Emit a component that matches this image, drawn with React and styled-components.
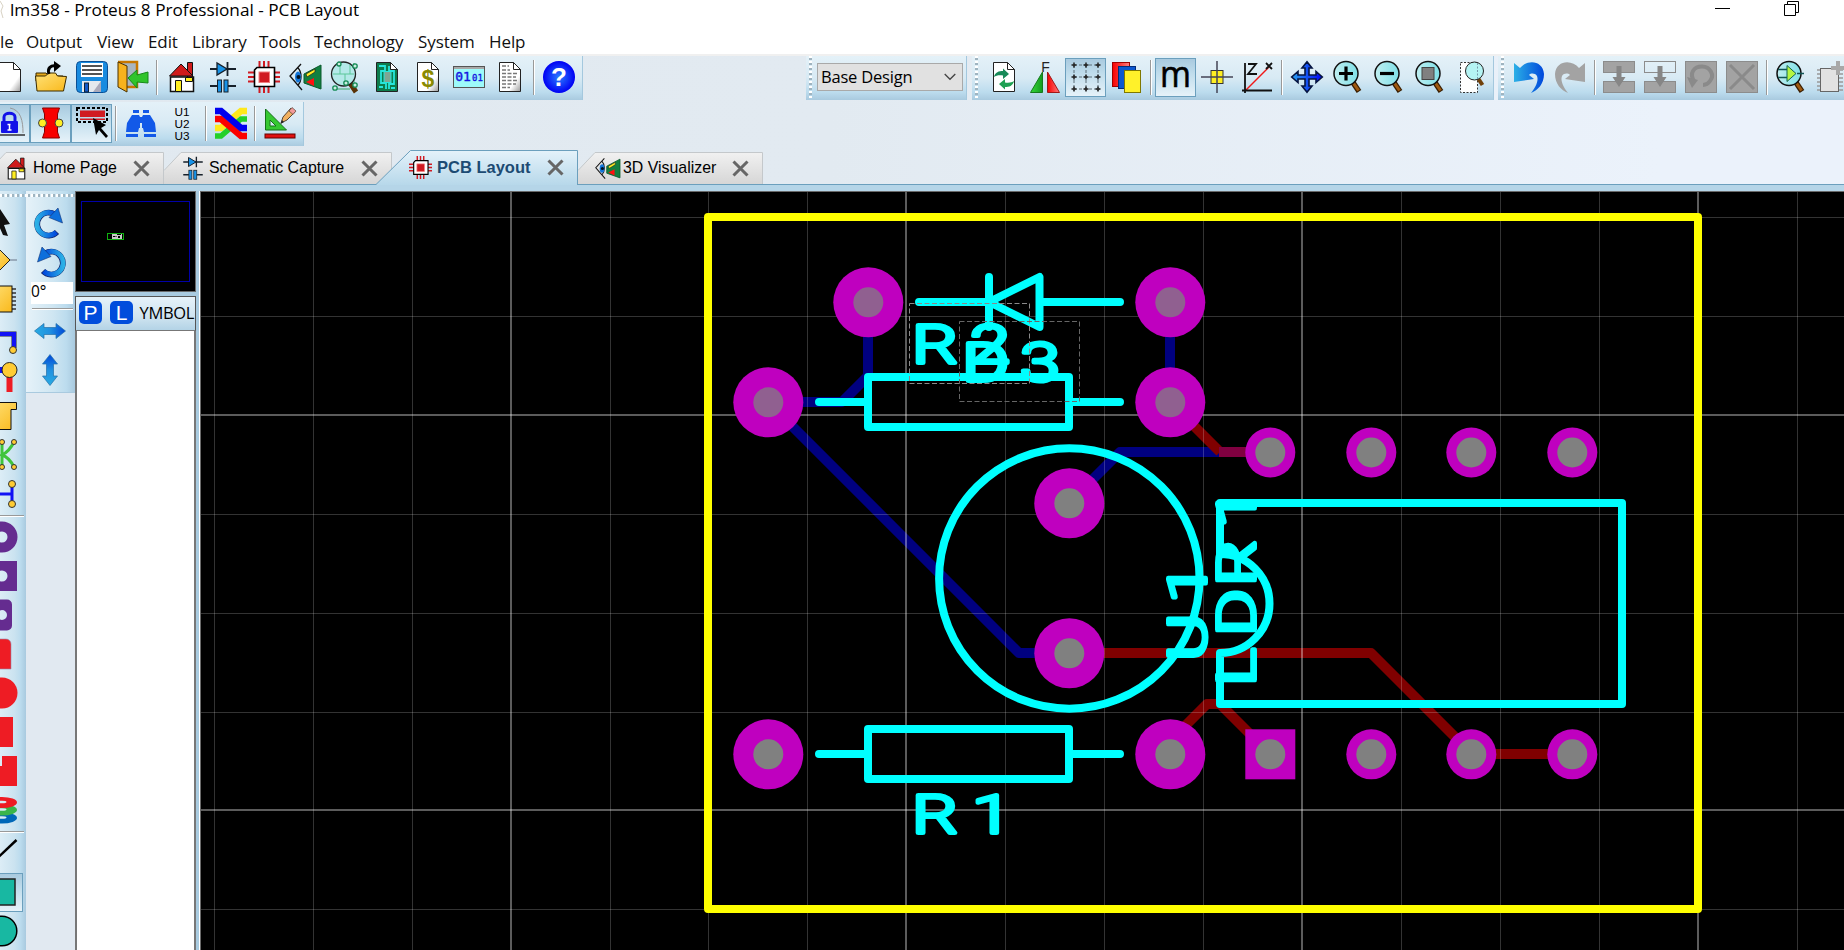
import React from "react";
import styled, { createGlobalStyle, css } from "styled-components";

const GlobalStyle = createGlobalStyle`
  * { box-sizing: border-box; }
  html, body { margin: 0; padding: 0; overflow: hidden; }
`;

const ui = `"Open Sans", "Noto Sans", sans-serif`;
const arial = `"Liberation Sans", Arial, sans-serif`;
const barGradient = `#e4f1f8 0%, #d8eaf4 50%, #bcdcee 82%, #a9cadf 100%`;

/* ---------- window frame ---------- */
const Window = styled.div`
  width: 1844px;
  height: 950px;
  overflow: hidden;
  display: flex;
  flex-direction: column;
  background: #fff;
  font-family: ${ui};
`;
const TitleBar = styled.header`
  height: 26px;
  display: flex;
  align-items: flex-start;
`;
const TitleText = styled.div`
  margin-left: 6px;
  width: 400px;
  font-size: 17.2px;
  line-height: 20px;
  white-space: nowrap;
  color: #000;
`;
const WindowButtons = styled.div`
  margin-left: auto;
  margin-right: 45px;
  display: flex;
  gap: 54px;
`;
const MenuBar = styled.nav`
  height: 28px;
  display: flex;
  gap: 14px;
  color: #111;
`;
const MenuItem = styled.span`
  width: ${(p) => p.$w}px;
  font-size: 17px;
  line-height: 32px;
  letter-spacing: -0.1px;
  white-space: nowrap;
`;

/* ---------- toolbars ---------- */
const Dock = styled.div`
  height: 131px;
  flex: none;
  border-top: 2px solid #f0f0f0;
  background: linear-gradient(90deg, #e1e9f0 0%, #e2eaf1 45%, #ebf2fb 90%);
  display: flex;
  flex-direction: column;
`;
const DockRow = styled.div`
  height: ${(p) => p.$h}px;
  padding-top: ${(p) => p.$pt || 0}px;
  display: flex;
  flex: none;
`;
const Group = styled.div`
  height: 44px;
  width: ${(p) => p.$w}px;
  flex: none;
  padding-bottom: 2px;
  margin-left: ${(p) => p.$ml || 0}px;
  display: flex;
  align-items: center;
  background: linear-gradient(180deg, ${barGradient});
  border-right: 1px solid #a4c8de;
`;
const Grip = styled.span`
  width: 3px;
  height: 42px;
  flex: none;
  margin: 0 ${(p) => p.$mr}px 0 3px;
  background: repeating-linear-gradient(180deg, #fff 0 2px, #9fb4c0 2px 4px, transparent 4px 5px);
`;
const cellSize = css`
  width: ${(p) => (p.$side ? 41.5 : 41)}px;
  height: 39px;
`;
const ToolButton = styled.button`
  ${cellSize}
  flex: none;
  padding: 0;
  margin: 0;
  border: 1px solid transparent;
  background: none;
  display: flex;
  align-items: center;
  justify-content: center;
  ${(p) =>
    p.$on &&
    css`
      border-color: #6b9fbd;
      background: linear-gradient(180deg, #a9cadf, #c0ddec 40%, #e6f2f9);
    `}
`;
const Separator = styled.span`
  width: 2px;
  height: 35px;
  margin: 0 3px;
  flex: none;
  border-left: 1px solid #999;
  border-right: 1px solid #fff;
`;
const SelectBox = styled.div`
  width: 146px;
  height: 28px;
  border: 1px solid #a9a9a9;
  background: #e1e1e1;
  padding: 0 6px 0 3px;
  display: flex;
  align-items: center;
  justify-content: space-between;
  font-size: 16.5px;
  letter-spacing: -0.2px;
  line-height: 26px;
  color: #000;
  white-space: nowrap;
`;

/* ---------- tabs ---------- */
const TabStrip = styled.div`
  height: 35px;
  margin-top: auto;
  display: flex;
  align-items: flex-end;
  border-bottom: 1px solid #6b9fbd;
`;
const Tab = styled.div`
  position: relative;
  width: ${(p) => p.$w}px;
  height: ${(p) => (p.$active ? 35 : 32)}px;
  margin-left: ${(p) => p.$ml || 0}px;
  margin-bottom: ${(p) => (p.$active ? -1 : 0)}px;
  z-index: ${(p) => (p.$active ? 2 : 1)};
  flex: none;
`;
const TabShape = styled.svg`
  position: absolute;
  inset: 0;
`;
const TabContent = styled.div`
  position: relative;
  height: 100%;
  display: flex;
  align-items: center;
  padding-left: ${(p) => p.$pl}px;
  font-family: ${arial};
  font-size: ${(p) => (p.$active ? 16.5 : 15.9)}px;
  font-weight: ${(p) => (p.$active ? 700 : 400)};
  color: ${(p) => (p.$active ? "#1d4b73" : "#000")};
  white-space: nowrap;
`;
const TabLabel = styled.span`
  width: ${(p) => p.$w}px;
  margin-left: ${(p) => p.$ml}px;
`;

/* ---------- body ---------- */
const Body = styled.main`
  flex: 1;
  min-height: 0;
  display: flex;
  border-top: 6px solid #b5d5e8;
  background: #e1e9f1;
`;
const ModeBar = styled.aside`
  width: 26px;
  flex: none;
  overflow: hidden;
  background: linear-gradient(90deg, #dcedf6 0, #cbe3f0 55%, #bcdcee 78%, #a9cadf 100%);
`;
const ModeStack = styled.div`
  width: 41px;
  margin-left: -19px;
  display: flex;
  flex-direction: column;
`;
const HGrip = styled.div`
  height: 3px;
  margin: 3px 0 4.5px;
  flex: none;
  background: repeating-linear-gradient(90deg, #fff 0 2px, #9fb4c0 2px 4px, transparent 4px 5px);
`;
const HRule = styled.div`
  height: 2px;
  width: ${(p) => p.$w}px;
  margin: ${(p) => p.$m};
  flex: none;
  border-top: 1px solid #999;
  border-bottom: 1px solid #fff;
`;
const RotateBar = styled.aside`
  width: 49px;
  height: 202px;
  flex: none;
  display: flex;
  flex-direction: column;
  align-items: center;
  background: linear-gradient(90deg, #e6f2f9, #cfe6f2 55%, #bcdcee 82%, #a9cadf 100%);
  border-bottom: 1px solid #a9cadf;
`;
const RotateGrip = styled(HGrip)`
  align-self: stretch;
  margin-bottom: 0;
`;
const AngleField = styled.div`
  width: 42px;
  height: 22px;
  margin: 5px 2px 3px 5px;
  background: #fff;
  font-size: 15.5px;
  line-height: 19px;
  color: #000;
  flex: none;
`;
const IconSlot = styled.span`
  display: flex;
  margin: ${(p) => p.$m};
`;
const SidePanel = styled.section`
  width: 125px;
  flex: none;
  display: flex;
  flex-direction: column;
  background: #a9cbe0;
  border-right: 1px solid #fff;
`;
const Preview = styled.div`
  width: 121px;
  height: 101px;
  flex: none;
  background: #000;
  border: 1px solid #6a6a6a;
`;
const PanelHeader = styled.div`
  width: 121px;
  height: 35px;
  margin-top: 4px;
  flex: none;
  padding: 0 0 2px 3px;
  display: flex;
  align-items: center;
  overflow: hidden;
  background: linear-gradient(180deg, #e6f2f9, #cfe4f0 60%, #b3d3e6);
  border: 1px solid #555;
  border-bottom-color: #777;
  font-size: 16.5px;
  letter-spacing: -0.3px;
  color: #000;
`;
const Badge = styled.span`
  width: 23px;
  height: 23px;
  margin-right: 8px;
  flex: none;
  border-radius: 5px;
  background: #004ddc;
  color: #fff;
  font-family: ${arial};
  font-size: 21px;
  line-height: 23px;
  text-align: center;
  letter-spacing: 0;
  & + & {
    margin-right: 6.5px;
  }
`;
const ListBox = styled.div`
  width: 121px;
  flex: 1;
  background: #fff;
  border: 2px solid #777;
  border-top: 0;
  border-bottom: 0;
`;
const Canvas = styled.div`
  flex: 1;
  min-width: 0;
  background: #000;
  border-left: 1px solid #6a6a6a;
`;
const Art = styled.svg`
  display: block;
  flex: none;
`;
const IconArt = styled(Art)`
  overflow: visible;
`;

/* ---------- icons ---------- */
const I = ({ children, w = 32, h = 32, vb }) => (
  <IconArt width={w} height={h} viewBox={vb || "0 0 32 32"} fill="none">
    {children}
  </IconArt>
);
const Page = ({ fill = "#fff", children }) => (
  <I>
    <path d="M5.500 1.500h14l7 7v22h-21z" fill={fill} stroke="#222" />
    <path d="M19.500 1.500v7h7z" fill="#fff" stroke="#222" />
    {children}
  </I>
);
const NewIcon = () => <Page fill="url(#paper)" />;
const OpenIcon = () => (
  <I>
    <path d="M1 12h10l3 3h14v5H1z" fill="#e5a91c" stroke="#3a2a00" />
    <path d="M2 30L0.500 15h10l3-3h7l2 3 9 .5L28.500 30z" fill="url(#gold)" stroke="#3a2a00" />
    <path d="M14 13c-2-6 2-9 7-8" stroke="#000" strokeWidth="3" />
    <path d="M19 0l7 5-7 6z" fill="#000" />
  </I>
);
const SaveIcon = () => (
  <I>
    <rect x=".5" y=".5" width="31" height="31" rx="4" fill="#188be0" stroke="#0c4f94" />
    <rect x="5" y="2" width="22" height="14" fill="#fff" />
    <path d="M6 5h20M6 9h20M6 13h20" stroke="#1b1b1b" strokeWidth="1.500" />
    <rect x="6" y="20" width="19" height="11" fill="#e4e9ee" />
    <path d="M17 31l8-11v11z" fill="#aab" />
    <rect x="8.500" y="22" width="4" height="9" fill="#1259c9" stroke="#123" />
  </I>
);
const ExitIcon = () => (
  <I>
    <path d="M1 1h19v25H8" fill="#a8b5c0" stroke="#c77700" strokeWidth="2.500" />
    <path d="M1 1l9 4v26l-9-5z" fill="#f7b21d" stroke="#4a3000" />
    <path d="M11 17l9-8v5l11-3v11l-11-1v6z" fill="#2fc42b" stroke="#17891a" />
  </I>
);
const HomeIcon = ({ s = 32 }) => (
  <I w={s} h={s}>
    <path d="M4.500 16h23v14.500h-23z" fill="#fff" stroke="#111" strokeWidth="1.500" />
    <path d="M21.500 1.500h5V16h-5z" fill="#d01b1b" stroke="#111" />
    <path d="M3.500 15L15 3l12 12z" fill="#d01b1b" stroke="#111" />
    <path d="M9.500 19.500h6v11h-6zM19.500 16.500h7v4h-7z" fill="#ffee22" stroke="#111" />
  </I>
);
const SchemIcon = ({ s = 32 }) => (
  <I w={s} h={s}>
    <path d="M3 8h26M20.500 1v14M3 25h8M21 25h8" stroke="#16202a" strokeWidth="1.800" />
    <path d="M10 2v12l10-6z" fill="#1893e8" stroke="#16202a" strokeWidth="1.300" />
    <rect x="10.500" y="19" width="4" height="12" fill="#1893e8" stroke="#16202a" />
    <rect x="17" y="19" width="4" height="12" fill="#1893e8" stroke="#16202a" />
  </I>
);
const ChipIcon = ({ s = 32 }) => (
  <I w={s} h={s}>
    <path d="M11.500 0v32M16 0v32M20.500 0v32M0 11.500h32M0 16h32M0 20.500h32" stroke="#d01b22" strokeWidth="2" />
    <path d="M9 6.500h17.500v19h-20V9z" fill="#fff" stroke="#000" strokeWidth="1.600" />
    <rect x="11" y="11" width="10.500" height="10.500" fill="#d01b22" stroke="#f08080" />
  </I>
);
const EyeIcon = ({ s = 32 }) => (
  <I w={s} h={s}>
    <path d="M12 3L1 15l12 14M9 7c4 4 4 13 0 17" stroke="#111" strokeWidth="1.300" />
    <ellipse cx="9" cy="16" rx="3" ry="5.500" fill="#1275d8" />
    <circle cx="9.500" cy="16" r="2" fill="#012" />
    <path d="M32 4v24l-17-6v-9z" fill="#118040" stroke="#0a5a2c" />
    <path d="M17 13l9-5v3l-8 5z" fill="#fe2" stroke="#222" strokeWidth=".7" />
    <path d="M17 21l8-4v8z" fill="#f11" />
  </I>
);
const Lens = ({ children, cx = 13, cy = 13, r = 12 }) => (
  <>
    <path d="M20 22l6 9" stroke="#3a1e00" strokeWidth="5.500" />
    <path d="M20 22l5.500 8" stroke="#a05a10" strokeWidth="3" />
    <circle cx={cx} cy={cy} r={r} fill="url(#lens)" stroke="#111" strokeWidth="1.500" />
    {children}
  </>
);
const ZoomIcon = ({ kind }) => (
  <I>
    <g transform="translate(1 -.5)">
      <Lens>
        {kind === "in" && <path d="M6 13h14M13 6v14" stroke="#000" strokeWidth="3.200" />}
        {kind === "out" && <path d="M6 13h14" stroke="#000" strokeWidth="3.200" />}
        {kind === "fit" && <rect x="7" y="7" width="12" height="12" fill="#808080" stroke="#444" />}
        {kind === "gate" && (
          <>
            <path d="M2 9h9M2 17h9M21 13h7" stroke="#155" strokeWidth="1.300" />
            <path d="M11 5v16l9-8z" fill="#b5f542" stroke="#165" />
          </>
        )}
      </Lens>
    </g>
  </I>
);
const GerberIcon = () => (
  <I>
    <path d="M24 2v24M6 28h14" stroke="#3aa96a" />
    <path d="M20 22l6 9" stroke="#5a3206" strokeWidth="5" />
    <circle cx="13.500" cy="13" r="12" fill="#b4e9e9" stroke="#222" strokeWidth="1.300" />
    <path d="M3 13h21M10 2v11M15 13v8M20 4v9" stroke="#5cc79a" />
    <g stroke="#158a55" strokeWidth="1.300" fill="#c8eee0">
      <circle cx="25" cy="5" r="2.200" /><circle cx="25" cy="24" r="2.200" />
      <circle cx="5" cy="27" r="2.200" /><circle cx="16" cy="22" r="2.200" /><circle cx="9" cy="3" r="2" />
    </g>
  </I>
);
const BoardPageIcon = () => (
  <Page fill="#0d7c4c">
    <path d="M8 5h6v5h-4v12h5v6M18 5v5h5v13h-5v5M8 26h4M20 27h4" stroke="#26e6dc" strokeWidth="1.800" />
    <rect x="13" y="10.500" width="7" height="11" fill="#7fa694" stroke="#26e6dc" />
  </Page>
);
const IconText = styled.text`
  font-family: ${(p) => p.$f || arial};
  font-size: ${(p) => p.$s}px;
  font-weight: ${(p) => p.$b || 400};
  text-anchor: middle;
`;
const DollarIcon = () => (
  <Page fill="url(#paper)">
    <IconText x="16" y="26" $s={23} $b={700} fill="#8a8a00">$</IconText>
  </Page>
);
const BinaryIcon = () => (
  <I>
    <rect x=".5" y="5.500" width="31" height="21" fill="#9dfafa" stroke="#555" />
    <path d="M1 7h30" stroke="#a9a9a9" strokeWidth="2" />
    <IconText x="10" y="20" $s={13} fill="#1414e0" $f="DejaVu Sans Mono, monospace" stroke="#1414e0" strokeWidth=".4">01</IconText>
    <IconText x="24.500" y="20" $s={9} fill="#1414e0" $f="DejaVu Sans Mono, monospace" stroke="#1414e0" strokeWidth=".3">01</IconText>
  </I>
);
const ReportIcon = () => (
  <Page fill="url(#paper)">
    <path d="M8 5h7M8 9h8M8 12.500h15M8 16h14M8 19.500h15M8 23h14M8 26.500h8" stroke="#777" strokeWidth="1.300" strokeDasharray="4 1.500" />
  </Page>
);
const HelpIcon = () => (
  <I>
    <circle cx="16" cy="16" r="16" fill="url(#help)" />
    <IconText x="16" y="25" $s={26} $b={700} fill="#fff">?</IconText>
  </I>
);
const LockIcon = () => (
  <I>
    <path d="M16 1c11 2 13 13 13 25" stroke="#999" />
    <path d="M0 28h31" stroke="#333" strokeWidth="1.500" />
    <path d="M10 15v-5c0-5 11-5 11 0v5" stroke="#1212e8" strokeWidth="3" />
    <rect x="7" y="14" width="17" height="12" rx="1" fill="#1212e8" />
    <path d="M15.500 17v6M13.500 17.500h3M13.500 23h4" stroke="#fff" strokeWidth="1.500" />
  </I>
);
const TapIcon = () => (
  <I>
    <path d="M7.500 1h17l-2 6v18l2 6h-17l2-6V7z" fill="#f80000" stroke="#800" />
    <circle cx="7.500" cy="16" r="4" fill="#ffee22" stroke="#444" />
    <circle cx="24" cy="16" r="4" fill="#ffee22" stroke="#444" />
  </I>
);
const PickIcon = () => (
  <I>
    <rect x="1" y="1" width="30" height="14" stroke="#000" strokeWidth="2" strokeDasharray="3 2" />
    <path d="M4 3.500h25V10H4zM4 11.500h25V13H4z" fill="#d01b22" />
    <path d="M17 11l3 17 3-5 7 8 2-2-7-8 5-3z" fill="#000" />
  </I>
);
const BinocularIcon = () => (
  <I>
    <path d="M8 3h6v3H8zM18 3h6v3h-6zM7 8h7l1 2v11h-1l-1 4H1l1-9zM25 8h-7l-1 2v11h1l1 4h12l-1-9z" fill="#1259e8" />
    <path d="M1 27h12v3H1zM19 27h12v3H19z" fill="#1259e8" />
    <path d="M14 10h4v6h-4z" fill="#1259e8" />
  </I>
);
const RefsIcon = () => (
  <I w={32} h={36} vb="0 0 32 36">
    {["U1", "U2", "U3"].map((t, i) => (
      <IconText key={t} x="16" y={10.5 + i * 12} $s={11} fill="#000" textLength="15" lengthAdjust="spacingAndGlyphs">{t}</IconText>
    ))}
  </I>
);
const RibbonIcon = () => (
  <I>
    <path d="M0 21h6l20-17h6" stroke="#ffe81c" strokeWidth="6.500" />
    <path d="M0 29h6l20-17h6" stroke="#23d029" strokeWidth="5.500" />
    <path d="M0 12h6l20 17h6" stroke="#fb0000" strokeWidth="6.500" />
    <path d="M0 4h6l20 17h6" stroke="#0000f0" strokeWidth="6.500" />
  </I>
);
const DraftIcon = () => (
  <I>
    <path d="M1.500 2v21h21z M6 13v6h6z" fill="#35c832" fillRule="evenodd" stroke="#14701a" />
    <rect x="1" y="27" width="30" height="4" fill="#e01010" stroke="#600" />
    <path d="M17 16l2-6 8-9 4 4-8 8z" fill="#f0b060" stroke="#543" />
    <path d="M25 4l3-3.500L32 4l-3 3.500z" fill="#f29a9a" stroke="#543" strokeWidth=".7" />
    <path d="M16.500 17l1.500-4 2 2z" fill="#222" />
  </I>
);
const RefreshIcon = () => (
  <Page>
    <path d="M6 16c1-5 5-6 9-6V7.500l6 5.500-6 5v-3.500c-4-.5-7 0-9 1.500z" fill="#178a58" />
    <path d="M26 20c-1 5-5 6-9 6v2.500l-6-5.500 6-5v3.500c4 .5 7 0 9-1.500z" fill="#1ea052" />
  </Page>
);
const MirrorIcon = () => (
  <I>
    <IconText x="16.500" y="11" $s={14} fill="#222">F</IconText>
    <path d="M13.500 11v20.500h-12z" fill="url(#green)" stroke="#157a1c" />
    <path d="M18.500 11v20.500h12z" fill="url(#red)" stroke="#a01818" />
  </I>
);
const GridIcon = () => (
  <I>
    <path d="M4 4h26M4 16h26M4 28h26M4 4v26M16 4v26M28 4v26" stroke="#5d6e78" strokeWidth="1" strokeDasharray="3 2" />
    {[4, 16, 28].map((y) =>
      [4, 16, 28].map((x) => (
        <path key={`${x}-${y}`} d={`M${x - 2.500} ${y}h5M${x} ${y - 2.500}v5`} stroke="#222" strokeWidth="1.500" />
      ))
    )}
  </I>
);
const LayersIcon = () => (
  <I>
    <g transform="translate(-1 0)">
      <rect x="2.500" y="1.500" width="17" height="24" fill="url(#red)" stroke="#a00000" />
      <rect x="8.500" y="5.500" width="17" height="22" fill="#0b57d0" stroke="#022c78" />
      <rect x="14.500" y="9.500" width="16" height="22" fill="#fff12a" stroke="#807800" />
    </g>
  </I>
);
const MetricIcon = () => (
  <I>
    <IconText x="15.500" y="26" $s={36} fill="#000" $f={ui} stroke="#000" strokeWidth=".6" textLength="31" lengthAdjust="spacingAndGlyphs">m</IconText>
  </I>
);
const OriginIcon = () => (
  <I>
    <rect x="10" y="9.500" width="12" height="13" fill="#ffee22" stroke="#333" />
    <path d="M0 16h32M16 0v32" stroke="#445" strokeWidth="1.500" />
  </I>
);
const PolarIcon = () => (
  <I>
    <path d="M3 30L27 6" stroke="#f01818" strokeWidth="1.500" />
    <path d="M3 2v30M0 29.500h30M6 3h8l-8 10h9M24 2l6 6M30 2l-6 6" stroke="#111" strokeWidth="1.800" />
  </I>
);
const PanIcon = () => (
  <I>
    <path
      d="M16 .7l5 6.300h-3v7h7v-3.500l6.300 5.500-6.300 5.500V18h-7v7h3l-5 6.300-5-6.300h3v-7H7v3.500L.7 16 7 10.500V14h7V7h-3z"
      fill="url(#blueH)" stroke="#051440" strokeWidth="1.600"
    />
  </I>
);
const ZoomAreaIcon = () => (
  <I>
    <g transform="translate(3.500 0)">
      <rect x="2" y="1.500" width="17" height="30" fill="#fff" stroke="#333" strokeDasharray="2 1.500" />
      <path d="M20 18l4 6" stroke="#70400a" strokeWidth="4" />
      <circle cx="16" cy="10" r="9" fill="#b5f4f4" stroke="#222" />
      <path d="M19 2v17" stroke="#79a" strokeDasharray="2 1.500" />
    </g>
  </I>
);
const UndoIcon = ({ redo }) => (
  <I>
    <g transform={redo ? "matrix(-1 0 0 1 32 0)" : undefined}>
      <path
        d="M1 2l6 5c7-9 23-8 24 6 0 10-6 16-13 19 4-5 8-12 6-17-2-3-6-3-8-1l5 4L1 21z"
        fill={redo ? "#a3a3a3" : "url(#undo)"}
      />
    </g>
  </I>
);
const BlockIcon = ({ kind }) => (
  <I>
    {(kind === "copy" || kind === "move") && (
      <>
        <rect x=".5" y=".5" width="31" height="11" fill={kind === "copy" ? "#a3a3a3" : "none"} stroke="#8c8c8c" />
        <rect x=".5" y="20.500" width="31" height="11" fill="#a3a3a3" stroke="#8c8c8c" />
        <path d="M13.500 5h5v11h4L16 26l-6.500-10h4z" fill="#868686" />
      </>
    )}
    {(kind === "rotate" || kind === "delete") && (
      <rect x=".5" y=".5" width="31" height="31" fill="#a3a3a3" stroke="#8c8c8c" />
    )}
    {kind === "rotate" && (
      <>
        <path d="M9 20C4 12 9 5.500 17 5.500S30 14 25 20c-2 3-4 4-7 4" stroke="#8a8a8a" strokeWidth="4" />
        <path d="M2 16l11 3-6 8z" fill="#8a8a8a" />
      </>
    )}
    {kind === "delete" && <path d="M4 4l24 24M28 4L4 28" stroke="#8a8a8a" strokeWidth="3" />}
  </I>
);
const MakeDeviceIcon = () => (
  <I>
    <path d="M1 9h26M1 13h26M1 17h26M1 21h26M1 25h26M1 29h26" stroke="#999" strokeWidth="1.500" />
    <rect x="4.500" y="7.500" width="18" height="23" fill="#e2e2e2" stroke="#666" />
    <path d="M15 7h14M22 0v14" stroke="#a8a8a8" strokeWidth="4" />
  </I>
);

/* mode bar icons: only the right half of each lies inside the window */
const CursorIcon = () => <I><path d="M14 4l10 15-6 1 4 11-5-1-4-9-4 4z" fill="#111" /></I>;
const ComponentIcon = () => <I><path d="M24 16h7" stroke="#89a" strokeWidth="1.500" /><path d="M14 6l10 10-10 10L4 16z" fill="url(#gold)" stroke="#222" /></I>;
const PackageIcon = () => (
  <I>
    <path d="M22 5h8M22 9h8M22 13h8M22 17h8M22 21h8M22 25h8" transform="translate(0 1)" stroke="#333" strokeWidth="1.600" />
    <rect x="2" y="3" width="24" height="26" fill="url(#gold)" stroke="#111" />
  </I>
);
const TrackIcon = () => (
  <I>
    <path d="M2 12h26v14" stroke="#223" strokeWidth="5" /><path d="M2 12h26v14" stroke="#1212f5" strokeWidth="4" />
    <circle cx="27" cy="28" r="3.500" fill="#fc3" stroke="#333" />
  </I>
);
const ViaIcon = () => (
  <I>
    <path d="M0 9h20" stroke="#1212f5" strokeWidth="6" /><path d="M23.500 14v17" stroke="#ee1c24" strokeWidth="6" />
    <circle cx="23.500" cy="9" r="7.500" fill="#fc3" stroke="#222" />
  </I>
);
const ZoneIcon = () => <I><path d="M2 2.500h28.500v7H25v20H2z" fill="url(#gold)" stroke="#111" /></I>;
const RatsnestIcon = () => (
  <I>
    <path d="M16 3v26M28 3c-3 6-6 10-12 13 6 2 9 6 12 12" stroke="#3fc43c" strokeWidth="3" />
    {[[16, 3], [28, 3], [16, 28], [28, 28]].map(([x, y]) => <circle key={`${x}${y}`} cx={x} cy={y} r="2.500" fill="#fc3" stroke="#333" />)}
  </I>
);
const ConnectIcon = () => (
  <I>
    <path d="M2 16h24M26 6v20" stroke="#1212f5" strokeWidth="3" />
    <circle cx="26" cy="6" r="3.500" fill="#fc3" stroke="#333" /><circle cx="26" cy="26" r="3.500" fill="#fc3" stroke="#333" />
  </I>
);
const RoundPadIcon = () => <I><circle cx="16" cy="16" r="10.500" stroke="#652c90" strokeWidth="10" /></I>;
const SquarePadIcon = () => <I><path d="M1 1h30v30H1zM16 10.500a5.500 5.500 0 1 0 0 11a5.500 5.500 0 0 0 0-11z" fill="#652c90" fillRule="evenodd" /></I>;
const DilPadIcon = () => <I><path d="M11 0.500h10a5 5 0 0 1 5 5v21a5 5 0 0 1-5 5H11zM16 11a5 5 0 1 0 0 10a5 5 0 0 0 0-10z" fill="#652c90" fillRule="evenodd" /></I>;
const EdgePadIcon = () => <I><path d="M5 1h15a5 5 0 0 1 5 5v25H5z" fill="#ee1c24" stroke="#98a" strokeWidth=".6" /></I>;
const SmtRoundIcon = () => <I><circle cx="16" cy="16" r="15.500" fill="#ee1c24" /></I>;
const SmtRectIcon = () => <I><path d="M4 1h23v30H4z" fill="#ee1c24" /></I>;
const SmtPolyIcon = () => <I><path d="M2 11h14V1h15v30H2z" fill="#ee1c24" /></I>;
const StackIcon = () => (
  <I>
    {[["#0068b8", 24], ["#39b54a", 16], ["#ee1c24", 8.5]].map(([c, y]) => (
      <g key={c}><ellipse cx="16" cy={y} rx="15" ry="5.500" fill={c} /><ellipse cx="16" cy={y - 0.500} rx="4.500" ry="1.300" fill="#d8ecf5" /></g>
    ))}
  </I>
);
const LineIcon = () => <I><path d="M2 30L30.500 3" stroke="#000" strokeWidth="2.500" /></I>;
const BoxIcon = () => <I><rect x="2" y="3" width="27" height="26" fill="#18b8a2" stroke="#222" strokeWidth="1.500" /></I>;
const CircleIcon = () => <I><circle cx="16" cy="16" r="14.800" fill="#18b8a2" stroke="#000" strokeWidth="1.500" /></I>;

const RotateIcon = ({ ccw }) => (
  <I w={30} h={30} vb="0 0 30 30">
    <g transform={ccw ? "matrix(-1 0 0 1 30 0)" : undefined}>
      <path d="M22 6.500A11.500 11.500 0 1 0 24 24" stroke="#126" strokeWidth="5.800" />
      <path d="M22 6.500A11.500 11.500 0 1 0 23.300 24.300" stroke="url(#undo)" strokeWidth="4.800" />
      <path d="M25 0l4.500 15L16 9.500z" fill="#0d6fdc" stroke="#137" strokeWidth=".6" />
    </g>
  </I>
);
const FlipIcon = ({ v }) => (
  <I>
    <g transform={v ? "rotate(-90 16 16)" : undefined}>
      <path d="M.5 16L10 8.500v4h12v-4l9.500 7.500-9.500 7.500v-4H10v4z" fill="url(#flip)" stroke="#2470a8" strokeWidth=".7" />
    </g>
  </I>
);
const CloseIcon = () => (
  <I w={17} h={17} vb="0 0 17 17">
    <path d="M1.500 1.500l14 14M15.500 1.500l-14 14" stroke="#666" strokeWidth="3" />
  </I>
);
const Defs = () => (
  <svg width="0" height="0" style={{ position: "absolute" }}>
    <defs>
      <linearGradient id="paper" x1="0" y1="0" x2="1" y2="1"><stop offset=".7" stopColor="#fff" /><stop offset="1" stopColor="#999" /></linearGradient>
      <linearGradient id="gold" x1="0" y1="0" x2="1" y2="1"><stop offset="0" stopColor="#ffe27a" /><stop offset="1" stopColor="#f9b91c" /></linearGradient>
      <linearGradient id="green"><stop offset="0" stopColor="#35d93a" /><stop offset="1" stopColor="#129a1e" /></linearGradient>
      <linearGradient id="red"><stop offset="0" stopColor="#f80000" /><stop offset="1" stopColor="#ff7d7d" /></linearGradient>
      <linearGradient id="blueH"><stop offset="0" stopColor="#2aa3f0" /><stop offset="1" stopColor="#0000f5" /></linearGradient>
      <linearGradient id="flip"><stop offset="0" stopColor="#29abe2" /><stop offset=".5" stopColor="#2090e0" /><stop offset="1" stopColor="#0048d8" /></linearGradient>
      <linearGradient id="undo"><stop offset="0" stopColor="#2bb0e6" /><stop offset="1" stopColor="#0048dc" /></linearGradient>
      <linearGradient id="lens"><stop offset="0" stopColor="#c0eef0" /><stop offset="1" stopColor="#7fe0e8" /></linearGradient>
      <radialGradient id="help"><stop offset="0" stopColor="#2a7dff" /><stop offset="1" stopColor="#0000f4" /></radialGradient>
    </defs>
  </svg>
);

/* ---------- board drawing ---------- */
const SilkText = styled.text`
  font-family: Roboto, ${arial};
  font-weight: 300;
  font-size: 53px;
  fill: #00ffff;
  stroke: #00ffff;
  stroke-width: 4px;
  stroke-linejoin: round;
  stroke-linecap: round;
`;
const stretch = 1.36;
const SilkLabel = ({ x, y, turn, gaps, children }) => (
  <SilkText
    transform={`translate(${x} ${y}) rotate(${turn ? -90 : 0}) scale(${stretch} 1)`}
    x={gaps.map((g) => g / stretch).join(" ")}
    y="0"
  >
    {children}
  </SilkText>
);
const columns = [214, 313, 412, 511, 610, 708, 807, 906, 1005, 1104, 1203, 1302, 1401, 1500, 1599, 1698, 1797];
const rows = [217, 316, 415, 514, 613, 712, 810, 909];
const bigPads = [
  [868.3, 302.3, 1], [768.3, 402.3, 1], [1170.3, 302.3, 1], [1170.3, 402.3, 1],
  [1069.3, 503.3], [1069.3, 653.3], [768.3, 754.3], [1170.3, 754.3],
];
const smallPads = [
  [1270.3, 452.5], [1371.3, 452.5], [1471.3, 452.5], [1572.3, 452.5],
  [1371.3, 754.3], [1471.3, 754.3], [1572.3, 754.3],
];
const Board = () => (
  <Art width="1643" height="759" viewBox="201 191 1643 759" fill="none">
    <path d="M201 191.500h1643" stroke="#6a6a6a" />
    <g stroke="#000080" strokeWidth="10" strokeLinejoin="round">
      <path d="M868 302v74l-26 26h-74" />
      <path d="M768 402l251 251h50" />
      <path d="M1170 302v100" />
      <path d="M1069 503l51-51h150" />
    </g>
    <g stroke="#800000" strokeWidth="10" strokeLinejoin="round">
      <path d="M1170 402l50 50" />
      <path d="M1219 452h51" stroke="#800040" />
      <path d="M1069 653h302l101 101h100" />
      <path d="M1170 754v-13l37-37h13l50 50" />
    </g>
    <g shapeRendering="crispEdges">
      {columns.map((x) =>
        [511, 906, 1302, 1698].includes(x)
          ? <path key={x} d={`M${x} 192V950`} stroke="#fff" strokeOpacity=".36" strokeWidth="2" />
          : <path key={x} d={`M${x + 0.500} 192V950`} stroke="#fff" strokeOpacity=".2" />
      )}
      {rows.map((y) =>
        [415, 810].includes(y)
          ? <path key={y} d={`M201 ${y}H1844`} stroke="#fff" strokeOpacity=".36" strokeWidth="2" />
          : <path key={y} d={`M201 ${y + 0.500}H1844`} stroke="#fff" strokeOpacity=".2" />
      )}
    </g>
    <rect x="708" y="217" width="990" height="692" stroke="#ffff00" strokeWidth="8" strokeLinejoin="round" />
    {bigPads.map(([x, y, mixed]) => (
      <g key={`${x}-${y}`}>
        <circle cx={x} cy={y} r="35" fill="#bf00bf" />
        <circle cx={x} cy={y} r="15" fill={mixed ? "#906090" : "#808080"} />
      </g>
    ))}
    {smallPads.map(([x, y]) => (
      <g key={`${x}-${y}`}>
        <circle cx={x} cy={y} r="25" fill="#bf00bf" />
        <circle cx={x} cy={y} r="15" fill="#808080" />
      </g>
    ))}
    <rect x="1245.300" y="729.300" width="50" height="50" fill="#bf00bf" />
    <circle cx="1270.300" cy="754.300" r="15" fill="#808080" />
    <g stroke="#00ffff" strokeWidth="8" strokeLinecap="round" strokeLinejoin="round">
      <path d="M919 302h70M1040 302h80M989 277v50M1039.500 277v50L989 302z" />
      <path d="M868 377h201v50H868zM819 402h49M1069 402h51" />
      <path d="M868 729h201v50H868zM819 754h49M1069 754h51" />
      <circle cx="1069.300" cy="578.500" r="130.200" />
      <path d="M1220 503h402v201h-402v-51a49.500 49.500 0 0 0 0-99z" />
    </g>
    <SilkLabel x={912} y={833} gaps={[0, 60]}>R1</SilkLabel>
    <SilkLabel x={912} y={363} gaps={[0, 58]}>R2</SilkLabel>
    <SilkLabel x={962} y={381} gaps={[0, 58]}>D3</SilkLabel>
    <SilkLabel x={1206} y={661} turn gaps={[0, 58]}>U1</SilkLabel>
    <SilkLabel x={1255} y={686} turn gaps={[0, 50, 100, 158]}>LDR1</SilkLabel>
    <rect x="909.500" y="303.500" width="120" height="80" stroke="#8a8a8a" strokeDasharray="5 2.500" />
    <rect x="959.500" y="321.500" width="120" height="80" stroke="#666" strokeDasharray="5 2.500" />
  </Art>
);

/* ---------- assembly ---------- */
const Tool = ({ icon, on }) => <ToolButton $on={on}>{icon}</ToolButton>;

const TabItem = ({ w, ml, pl, active, icon, label, labelW, gap }) => {
  const h = active ? 35 : 32;
  const shape = active ? `M0 34.500L34.500 .5H${w - 0.500}V35` : `M0 18.500L17 .5H${w - 0.500}V32`;
  const body = active ? `${shape}L0 35z` : `${shape}H0z`;
  return (
    <Tab $w={w} $ml={ml} $active={active}>
      <TabShape width={w} height={h}>
        <defs>
          <linearGradient id={`tab-${labelW}`} x2="0" y2="1">
            <stop offset="0" stopColor={active ? "#e4f2fa" : "#f1f1f1"} />
            <stop offset="1" stopColor={active ? "#b7d8ea" : "#d6d6d6"} />
          </linearGradient>
        </defs>
        <path d={body} fill={`url(#tab-${labelW})`} />
        <path d={shape} fill="none" stroke={active ? "#6b9fbd" : "#c4c8cb"} />
      </TabShape>
      <TabContent $pl={pl} $active={active}>
        {icon}
        <TabLabel $w={labelW} $ml={gap}>{label}</TabLabel>
        <CloseIcon />
      </TabContent>
    </Tab>
  );
};

const menus = [
  ["le", 12], ["Output", 57], ["View", 37], ["Edit", 30], ["Library", 53],
  ["Tools", 41], ["Technology", 90], ["System", 57], ["Help", 37],
];
const modeIcons = [
  [CursorIcon, ComponentIcon, PackageIcon, TrackIcon, ViaIcon, ZoneIcon, RatsnestIcon, ConnectIcon],
  [RoundPadIcon, SquarePadIcon, DilPadIcon, EdgePadIcon, SmtRoundIcon, SmtRectIcon, SmtPolyIcon, StackIcon],
  [LineIcon, BoxIcon, CircleIcon],
];

export default function App() {
  return (
    <Window>
      <GlobalStyle />
      <Defs />
      <TitleBar>
        <I w={4} h={20} vb="0 0 4 20"><path d="M0 1l3 5-2 5 2 7" stroke="#d8d2c4" /></I>
        <TitleText>lm358 - Proteus 8 Professional - PCB Layout</TitleText>
        <WindowButtons>
          <I w={15} h={18} vb="0 0 15 18"><path d="M0 8.500h15" stroke="#000" /></I>
          <I w={15} h={18} vb="0 0 15 18"><path d="M.5 4.500h11v11H.5zM3.500 4V1.500h11v11H12" stroke="#000" /></I>
        </WindowButtons>
      </TitleBar>
      <MenuBar>
        {menus.map(([t, w]) => <MenuItem key={t} $w={w}>{t}</MenuItem>)}
      </MenuBar>

      <Dock>
        <DockRow $h={46}>
          <Group $w={594} $ml={-11}>
            <Tool icon={<NewIcon />} /><Tool icon={<OpenIcon />} /><Tool icon={<SaveIcon />} /><Tool icon={<ExitIcon />} />
            <Separator />
            <Tool icon={<HomeIcon />} /><Tool icon={<SchemIcon />} /><Tool icon={<ChipIcon />} /><Tool icon={<EyeIcon />} />
            <Tool icon={<GerberIcon />} /><Tool icon={<BoardPageIcon />} /><Tool icon={<DollarIcon />} /><Tool icon={<BinaryIcon />} />
            <Tool icon={<ReportIcon />} />
            <Separator />
            <Tool icon={<HelpIcon />} />
          </Group>
          <Group $w={161} $ml={223}>
            <Grip $mr={5} />
            <SelectBox>
              Base Design
              <I w={12} h={8} vb="0 0 12 8"><path d="M.7 1l5.300 5.300L11.300 1" stroke="#444" strokeWidth="1.300" /></I>
            </SelectBox>
          </Group>
          <Group $w={522} $ml={5}>
            <Grip $mr={5} />
            <Tool icon={<RefreshIcon />} /><Tool icon={<MirrorIcon />} /><Tool on icon={<GridIcon />} /><Tool icon={<LayersIcon />} />
            <Separator />
            <Tool on icon={<MetricIcon />} /><Tool icon={<OriginIcon />} /><Tool icon={<PolarIcon />} />
            <Separator />
            <Tool icon={<PanIcon />} /><Tool icon={<ZoomIcon kind="in" />} /><Tool icon={<ZoomIcon kind="out" />} />
            <Tool icon={<ZoomIcon kind="fit" />} /><Tool icon={<ZoomAreaIcon />} />
          </Group>
          <Group $w={360} $ml={4}>
            <Grip $mr={4.5} />
            <Tool icon={<UndoIcon />} /><Tool icon={<UndoIcon redo />} />
            <Separator />
            <Tool icon={<BlockIcon kind="copy" />} /><Tool icon={<BlockIcon kind="move" />} />
            <Tool icon={<BlockIcon kind="rotate" />} /><Tool icon={<BlockIcon kind="delete" />} />
            <Separator />
            <Tool icon={<ZoomIcon kind="gate" />} /><Tool icon={<MakeDeviceIcon />} />
          </Group>
        </DockRow>
        <DockRow $h={46}>
          <Group $w={315} $ml={-11}>
            <Tool on icon={<LockIcon />} /><Tool on icon={<TapIcon />} /><Tool on icon={<PickIcon />} />
            <Separator />
            <Tool icon={<BinocularIcon />} /><Tool icon={<RefsIcon />} />
            <Separator />
            <Tool icon={<RibbonIcon />} />
            <Separator />
            <Tool icon={<DraftIcon />} />
          </Group>
        </DockRow>
        <TabStrip>
          <TabItem w={175} ml={-11} pl={16} icon={<HomeIcon s={23} />} label="Home Page" labelW={100} gap={5} />
          <TabItem w={228} pl={17} icon={<SchemIcon s={24} />} label="Schematic Capture" labelW={152} gap={4} />
          <TabItem w={202} ml={-16} pl={33} active icon={<ChipIcon s={23} />} label="PCB Layout" labelW={110} gap={5} />
          <TabItem w={185} pl={17} icon={<EyeIcon s={25} />} label="3D Visualizer" labelW={109} gap={3} />
        </TabStrip>
      </Dock>

      <Body>
        <ModeBar>
          <HGrip />
          <ModeStack>
            {modeIcons.map((set, i) => (
              <React.Fragment key={i}>
                {i > 0 && <HRule $w={43} $m="1px 0" />}
                {set.map((Icon, j) => (
                  <ToolButton key={j} $side $on={Icon === BoxIcon}><Icon /></ToolButton>
                ))}
              </React.Fragment>
            ))}
          </ModeStack>
        </ModeBar>
        <RotateBar>
          <RotateGrip />
          <IconSlot $m="11px 5px 0 0"><RotateIcon /></IconSlot>
          <IconSlot $m="9px 0 0 3px"><RotateIcon ccw /></IconSlot>
          <AngleField>0°</AngleField>
          <HRule $w={41} $m="1px 0 5px 4px" />
          <IconSlot $m="0 1px 0 0"><FlipIcon /></IconSlot>
          <IconSlot $m="7px 1px 0 0"><FlipIcon v /></IconSlot>
        </RotateBar>
        <SidePanel>
          <Preview>
            <I w={119} h={99} vb="76 192 119 99">
              <rect x="81.500" y="201.500" width="108" height="80" stroke="#0000a8" />
              <rect x="107.500" y="233.500" width="16" height="6" stroke="#10b010" />
              <path d="M112 234h10v5h-10z" fill="#c8c8c8" />
              <path d="M113 236h2v1h-2zM115.500 236h1v1h-1zM118 236h2v2h-2zM117 234h4v1h-4z" fill="#000" />
            </I>
          </Preview>
          <PanelHeader>
            <Badge>P</Badge><Badge>L</Badge>YMBOL
          </PanelHeader>
          <ListBox />
        </SidePanel>
        <Canvas><Board /></Canvas>
      </Body>
    </Window>
  );
}
